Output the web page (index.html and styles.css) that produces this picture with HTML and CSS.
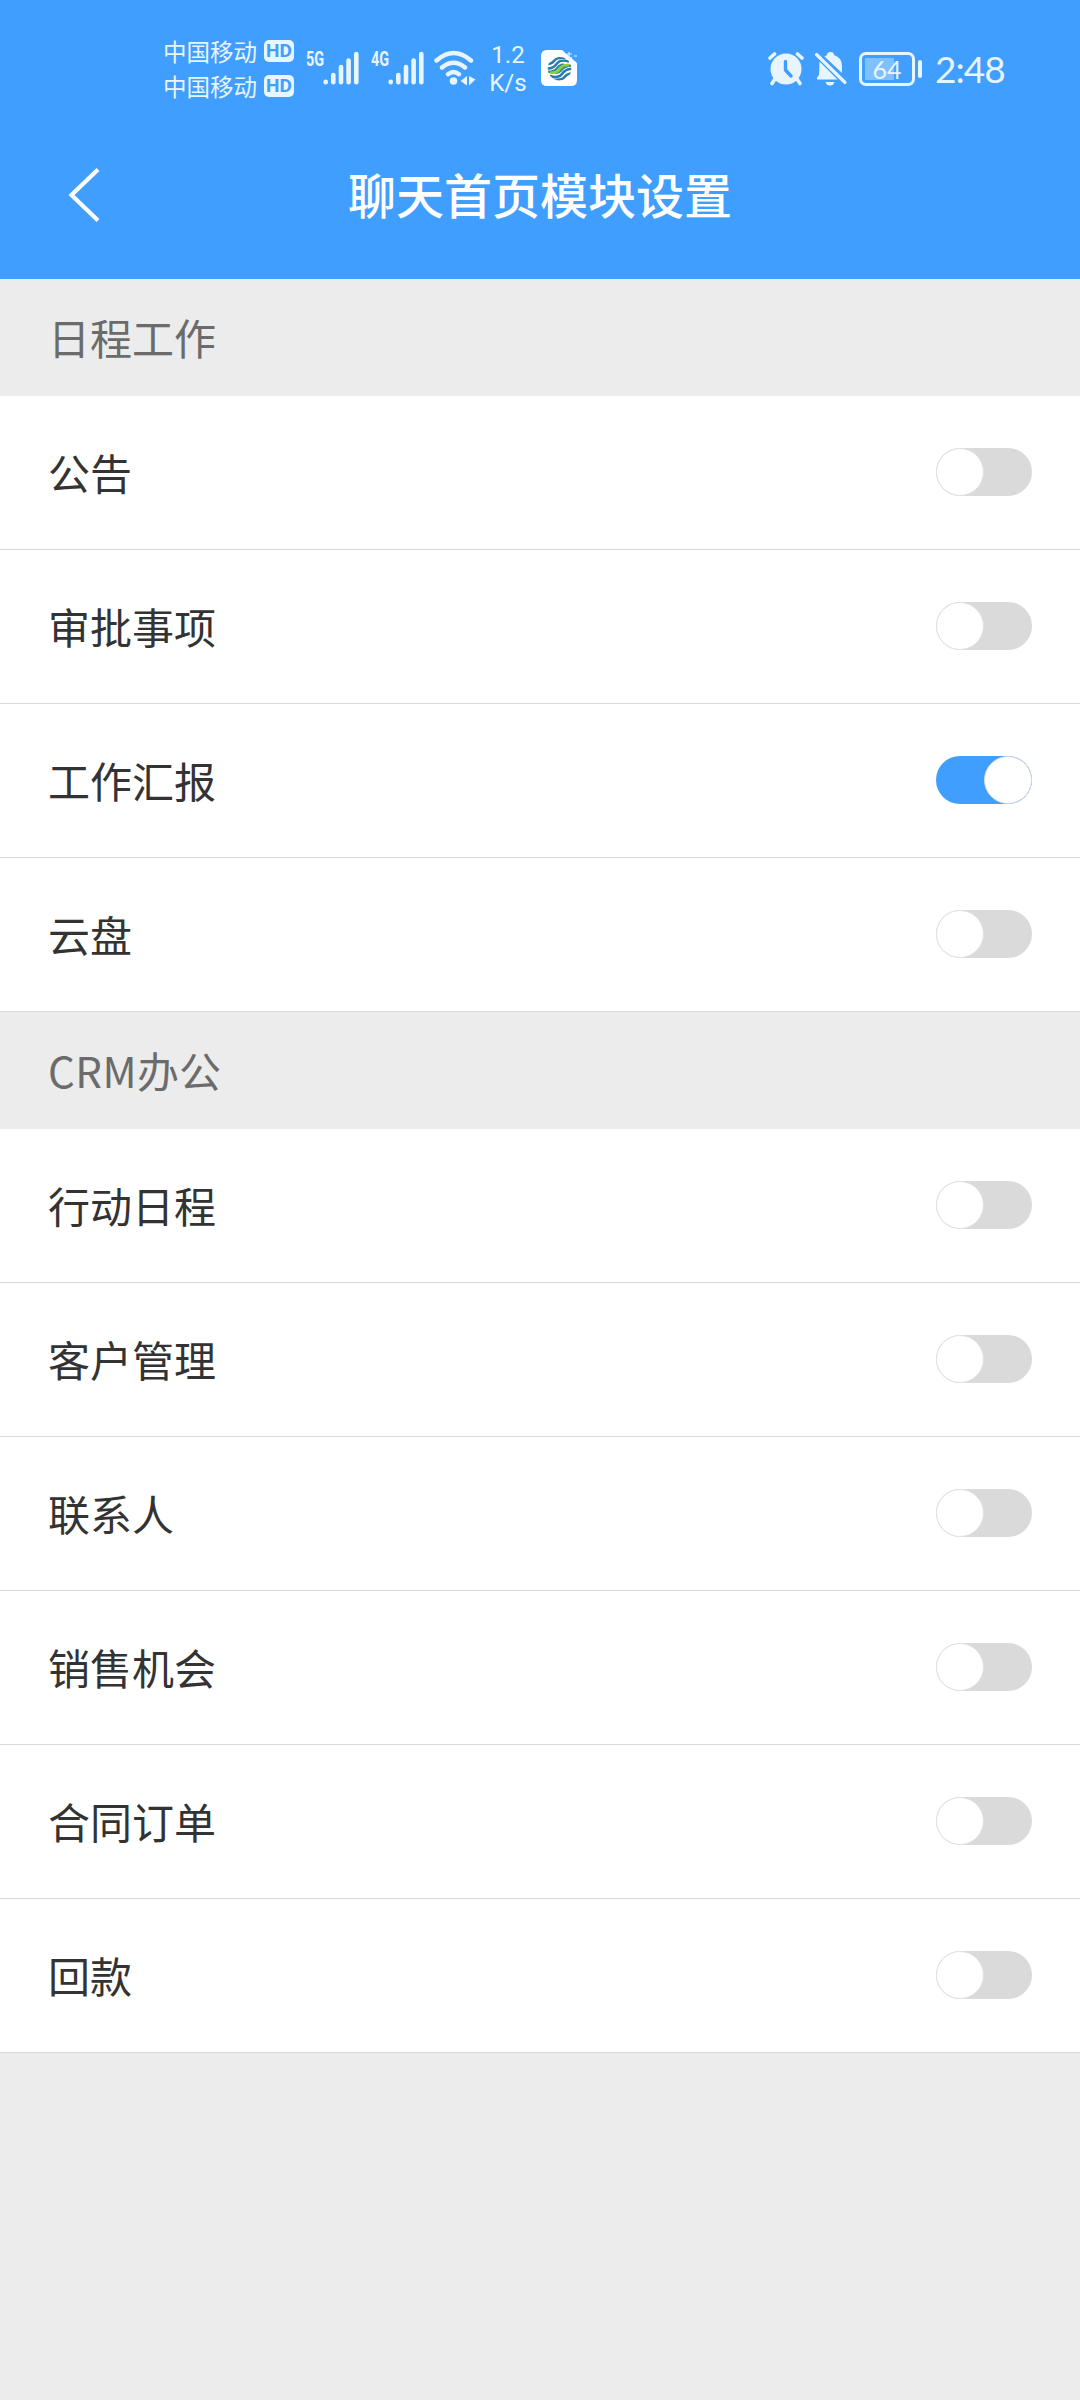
FILE: index.html
```html
<!DOCTYPE html>
<html lang="zh-CN">

<head>
  <meta charset="UTF-8" />
  <meta name="viewport" content="width=device-width, initial-scale=1" />
  <title>聊天首页模块设置</title>
  <link rel="stylesheet" href="styles.css">
</head>

<body>
  <header class="header">
    <div class="status-bar">
      <div class="status-left">
        <div class="carriers">
          <div class="carrier">中国移动<span class="hd">HD</span></div>
          <div class="carrier">中国移动<span class="hd">HD</span></div>
        </div>
        <div class="signal signal-5g">
          <span class="net">5G</span>
          <svg width="36" height="34" viewBox="0 0 36 34" fill="none" stroke="#e8f5ff" stroke-width="4.6" stroke-linecap="round">
            <path d="M2.7 30.7v.6M10.3 24v7.3M18 16v15.3M25.6 9.5v21.8M33.3 3v28.3" />
          </svg>
        </div>
        <div class="signal signal-4g">
          <span class="net">4G</span>
          <svg width="36" height="34" viewBox="0 0 36 34" fill="none" stroke="#e8f5ff" stroke-width="4.6" stroke-linecap="round">
            <path d="M2.7 30.7v.6M10.3 24v7.3M18 16v15.3M25.6 9.5v21.8M33.3 3v28.3" />
          </svg>
        </div>
        <svg class="wifi" width="42" height="36" viewBox="0 0 42 36" fill="none" stroke="#e8f5ff" stroke-width="4.4" stroke-linecap="round">
          <path d="M2.5 10.5Q19.5-4.5 37 10.5M8 17.5Q19.5 8 31 17.5M14 24.2Q19.5 20 25 24.2" />
          <circle cx="19.5" cy="31" r="3.8" fill="#e8f5ff" stroke="none" />
          <path d="M33 26v9.5l-6.5-4.500zM35 26v9.500l6.500-6z" fill="#e8f5ff" stroke="none" />
        </svg>
        <div class="speed">
          <span>1.2</span>
          <span>K/s</span>
        </div>
        <svg class="app-icon" width="38" height="38" viewBox="0 0 38 38">
          <clipPath id="logo">
            <circle cx="19.5" cy="19.7" r="11.8" />
          </clipPath>
          <path d="M7 1H22L37 14V31Q37 37 31 37H7Q1 37 1 31V7Q1 1 7 1z" fill="#fff" />
          <g fill="none" stroke-width="2.4" clip-path="url(#logo)">
            <path d="M6 15.500Q12 15 14.500 11.500T26 9M6 19.500H9Q14 19 17 14.500T29 12.500" stroke="#277bb0" />
            <path d="M33 24Q27 24.500 24.500 28T13 30.500M33 20H30Q25 20.500 22 25T10 27" stroke="#277bb0" />
            <path d="M6 23Q14 23 17 19.200T24 15.800M33 16.500Q25 16.500 22 20.300T15 23.700" stroke="#27919a" />
            <path d="M10 23.500Q17 24.500 19.500 20T29 16" stroke="#9bc83c" stroke-width="2.600" />
          </g>
          <path d="M29 3v7M27 5h5M28 8q2 3 4 0M34 7h3" fill="none" stroke="#d8f4ff" stroke-width="1.200" />
        </svg>
      </div>
      <div class="status-right">
        <svg class="alarm" width="36" height="36" viewBox="0 0 36 36">
          <path d="M2 7L6.500 3M29.500 3L34 7M7 28L4 32.500M29 28L32 32.500" fill="none" stroke="#e8f5ff" stroke-width="3.600" stroke-linecap="round" />
          <circle cx="18" cy="18" r="15.500" fill="#e8f5ff" />
          <path d="M17.500 10.500V19L23 25" fill="none" stroke="#409eff" stroke-width="3.400" stroke-linecap="round" />
        </svg>
        <svg class="bell" width="34" height="36" viewBox="0 0 34 36">
          <path d="M5.500 10.500L23.500 28.500H3V26.500L5 24zM10.500 5.500L13 4Q13 1 16.500 1T20 4Q28 6.500 28 15V22z" fill="#e8f5ff" />
          <path d="M2.500 3.500L31 31.500" stroke="#e8f5ff" stroke-width="3.200" stroke-linecap="round" />
          <path d="M11.500 31H20.500Q19.500 34.500 16 34.500T11.500 31z" fill="#e8f5ff" />
        </svg>
        <div class="battery"><span>64</span></div>
        <div class="battery-tip"></div>
        <div class="clock">2:48</div>
      </div>
    </div>
    <div class="nav-bar">
      <svg class="back" width="34" height="56" viewBox="0 0 34 56" fill="none" stroke="#fff" stroke-width="4.2">
        <path d="M31 2.500L4.500 28L31 53.500" />
      </svg>
      <h1>聊天首页模块设置</h1>
    </div>
  </header>

  <main>
    <h2>日程工作</h2>
    <ul>
      <li>公告<span class="switch"></span></li>
      <li>审批事项<span class="switch"></span></li>
      <li>工作汇报<span class="switch on"></span></li>
      <li>云盘<span class="switch"></span></li>
    </ul>

    <h2><span class="latin">CRM</span>办公</h2>
    <ul>
      <li>行动日程<span class="switch"></span></li>
      <li>客户管理<span class="switch"></span></li>
      <li>联系人<span class="switch"></span></li>
      <li>销售机会<span class="switch"></span></li>
      <li>合同订单<span class="switch"></span></li>
      <li>回款<span class="switch"></span></li>
    </ul>
  </main>
</body>

</html>
```

FILE: styles.css
```css
*,
*::before {
  box-sizing: border-box;
}

body {
  margin: 0;
  background-color: #ececec;
  color: #333;
  font-family: "Noto Sans CJK SC", sans-serif;
}

.header {
  height: 279px;
  background-color: #409eff;
  color: #fff;
}

/* Status bar */
.status-bar {
  display: flex;
  justify-content: space-between;
  height: 114px;
  padding: 34px 75px 0 163px;
  color: #e8f5ff;
}

.status-left,
.status-right {
  display: flex;
  align-items: flex-start;
}

.carriers {
  width: 131px;
}

.carrier {
  display: flex;
  align-items: center;
  height: 35px;
  font-size: 23.5px;
  line-height: 35px;
}

.hd {
  width: 30px;
  height: 22px;
  margin: 0 0 1px 7px;
  border-radius: 5px;
  background-color: #e8f5ff;
  color: #409eff;
  font: bold 19px/22px Roboto, sans-serif;
  text-align: center;
}

.signal {
  display: flex;
  align-items: flex-start;
}

.signal svg {
  margin-top: 17px;
}

.signal-5g {
  margin-left: 12px;
}

.signal-4g {
  margin-left: 12px;
}

.net {
  width: 17px;
  margin-top: 15px;
  font: bold 20px/20px Roboto, sans-serif;
  transform: scaleX(0.72);
  transform-origin: left;
}

.wifi {
  margin: 16px 0 0 10px;
}

.speed {
  display: flex;
  flex-direction: column;
  align-items: center;
  width: 38px;
  margin: 7px 0 0 13px;
  font: 24px/28px Roboto, sans-serif;
}

.app-icon {
  margin: 15px 0 0 13px;
}

.alarm {
  margin: 17px 10px 0 0;
}

.bell {
  margin: 17px 11px 0 0;
}

.battery {
  width: 56px;
  height: 34px;
  margin-top: 18px;
  padding: 3px;
  border: 3px solid #e8f5ff;
  border-radius: 7px;
}

.battery span {
  display: block;
  height: 22px;
  background: linear-gradient(to right, #7fc0ff 66%, transparent 66%);
  font: 25px/22px Lato, sans-serif;
  text-align: center;
}

.battery-tip {
  width: 4px;
  height: 18px;
  margin: 26px 13px 0 3px;
  border-radius: 2px;
  background-color: #e8f5ff;
}

.clock {
  width: 70px;
  margin-top: 14px;
  font: 37px/42px Lato, sans-serif;
  letter-spacing: -1px;
  white-space: nowrap;
}

/* Title bar */
.nav-bar {
  display: flex;
  align-items: center;
  height: 165px;
  padding: 0 101px 3px 67px;
}

h1 {
  flex: 1;
  margin: -5px 0 0;
  font-size: 48px;
  font-weight: 500;
  text-align: center;
}

/* Setting list */
h2 {
  height: 117px;
  margin: 0;
  padding-left: 48px;
  color: #6b6b6b;
  font-size: 42px;
  font-weight: 400;
  line-height: 116px;
}

.latin {
  letter-spacing: 0.5px;
}

ul {
  margin: 0;
  padding: 0;
  list-style: none;
}

li {
  display: flex;
  align-items: center;
  justify-content: space-between;
  height: 154px;
  padding: 0 48px 1px;
  border-bottom: 1px solid #d9d9d9;
  background-color: #fff;
  font-size: 42px;
  line-height: 60px;
}

.switch {
  width: 96px;
  height: 48px;
  border-radius: 24px;
  background-color: #dadada;
}

.switch::before {
  content: "";
  display: block;
  width: 48px;
  height: 48px;
  border: 1px solid #e2e2e2;
  border-radius: 50%;
  background-color: #fff;
}

.switch.on {
  background-color: #409eff;
}

.switch.on::before {
  margin-left: 48px;
  border-color: #d5dbe2;
}
```
